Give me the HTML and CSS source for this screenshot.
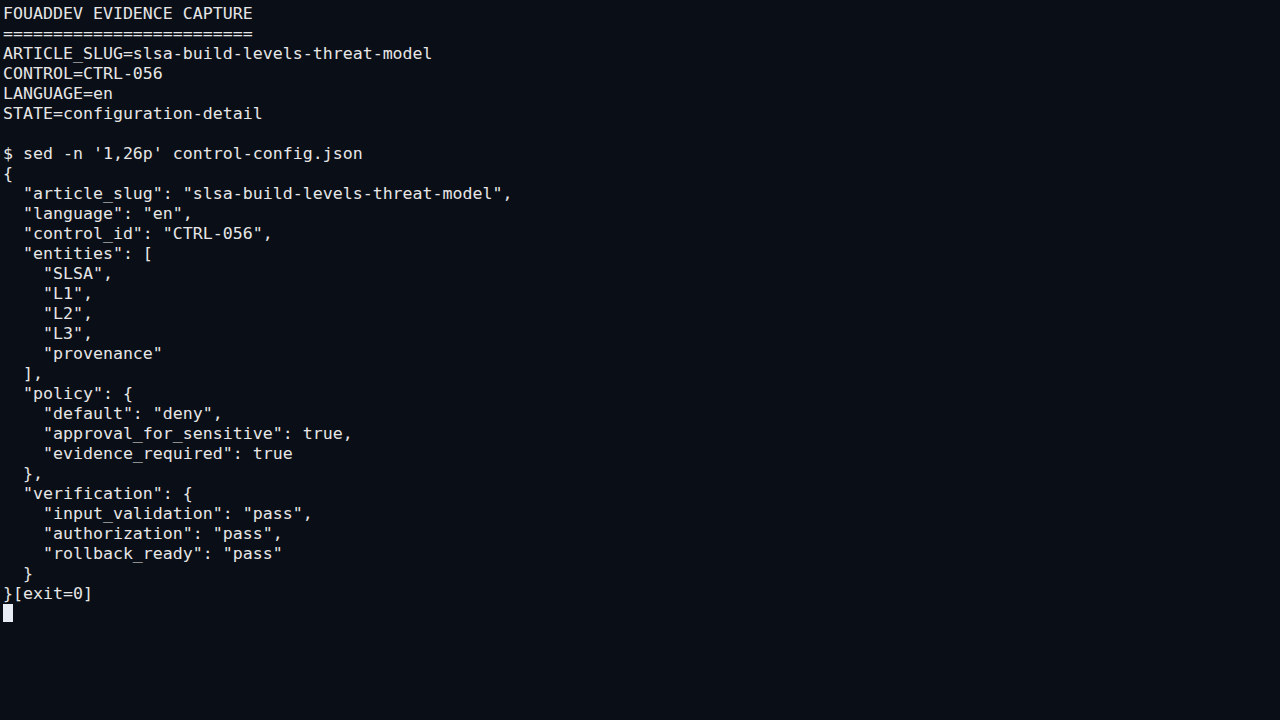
FILE: index.html
```html
<!DOCTYPE html>
<html>
<head>
<meta charset="utf-8">
<link rel="stylesheet" href="styles.css">
</head>
<body>
<main class="screen">
<pre class="term">FOUADDEV EVIDENCE CAPTURE
=========================
ARTICLE_SLUG=slsa-build-levels-threat-model
CONTROL=CTRL-056
LANGUAGE=en
STATE=configuration-detail

$ sed -n '1,26p' control-config.json
{
  "article_slug": "slsa-build-levels-threat-model",
  "language": "en",
  "control_id": "CTRL-056",
  "entities": [
    "SLSA",
    "L1",
    "L2",
    "L3",
    "provenance"
  ],
  "policy": {
    "default": "deny",
    "approval_for_sensitive": true,
    "evidence_required": true
  },
  "verification": {
    "input_validation": "pass",
    "authorization": "pass",
    "rollback_ready": "pass"
  }
}[exit=0]
<span class="cursor"> </span></pre>
</main>
</body>
</html>
```
FILE: styles.css
```css
html {
  height: 720px;
  background: #0a0e16;
}
body {
  margin: 0;
  padding: 0;
  height: 720px;
  background: #0a0e16;
}
.screen {
  height: 720px;
  background: #0a0e16;
  overflow: hidden;
}
.term {
  margin: 0;
  padding: 4px 3px 0;
  font-family: "DejaVu Sans Mono", monospace;
  font-size: 16.6px;
  line-height: 20px;
  color: #e6e6e6;
  white-space: pre;
}
.cursor {
  display: inline-block;
  width: 10px;
  height: 18px;
  vertical-align: top;
  background: #e8ecf5;
}
```
